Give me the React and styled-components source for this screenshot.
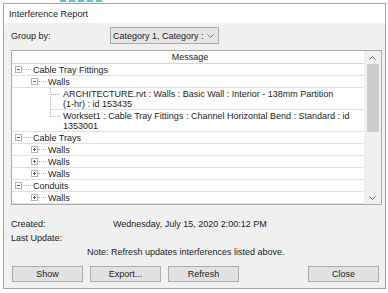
import React from 'react';
import styled, { createGlobalStyle } from 'styled-components';

const GlobalStyle = createGlobalStyle`
  html, body {
    margin: 0;
    padding: 0;
    background: #ffffff;
  }
  body {
    font-family: "Liberation Sans", Arial, sans-serif;
    font-size: 9px;
    color: #1c1c1c;
  }
`;

const Page = styled.div`
  width: 388px;
  height: 293px;
  padding: 0 2px 0 3px;
  box-sizing: border-box;
`;

const TopMark = styled.div`
  height: 3px;
  display: flex;
  padding-left: 57px;
`;

const Dash = styled.div`
  width: 42px;
  height: 0;
  border-top: 2px dashed #5cc6cf;
`;

const Dialog = styled.div`
  width: 383px;
  height: 286px;
  box-sizing: border-box;
  border: 1px solid #a4a4a4;
  display: flex;
  flex-direction: column;
`;

const TitleBar = styled.div`
  height: 19px;
  flex: none;
  background: #ffffff;
  display: flex;
  align-items: center;
  padding-left: 5px;
  font-size: 9.2px;
`;

const Body = styled.div`
  flex: 1;
  background: #f0f0f0;
  padding: 4px 3px 0 7px;
  display: flex;
  flex-direction: column;
`;

const GroupRow = styled.div`
  height: 17px;
  display: flex;
  align-items: center;
`;

const Label = styled.div`
  width: ${(p) => p.w}px;
  flex: none;
`;

const Dropdown = styled.div`
  width: 109px;
  height: 17px;
  box-sizing: border-box;
  background: #e5e5e5;
  border: 1px solid #acacac;
  display: flex;
  align-items: center;
  padding: 0 4px 0 2px;
  gap: 4px;
  white-space: nowrap;
  overflow: hidden;
`;

const DropText = styled.span`
  flex: 1;
  overflow: hidden;
`;

const Grid = styled.div`
  margin-top: 6px;
  height: 155px;
  box-sizing: border-box;
  border: 1px solid #ababab;
  background: #ffffff;
  display: flex;
`;

const GridMain = styled.div`
  flex: 1;
  display: flex;
  flex-direction: column;
  min-width: 0;
`;

const Header = styled.div`
  height: 13px;
  box-sizing: border-box;
  border-bottom: 1px solid #d6d6d6;
  display: flex;
  align-items: center;
  justify-content: center;
  padding-left: 4px;
`;

const Row = styled.div`
  height: ${(p) => p.h}px;
  box-sizing: border-box;
  display: flex;
  align-items: ${(p) => (p.leaf ? 'stretch' : 'center')};
  white-space: nowrap;
  background-image: linear-gradient(#e0e0e0, #e0e0e0);
  background-repeat: no-repeat;
  background-size: 100% 1px;
  background-position: ${(p) => p.lineFrom || 0}px 100%;
  padding-bottom: 1px;
`;

const Expander = styled.div`
  width: 7px;
  height: 7px;
  box-sizing: border-box;
  border: 1px solid #b2b2b2;
  margin-left: ${(p) => p.indent}px;
  display: flex;
  align-items: center;
  justify-content: center;
  flex: none;
`;

const Sign = styled.div`
  width: 3px;
  height: 1px;
  background: #666;
  display: flex;
  justify-content: center;
  align-items: center;
`;

const SignBar = styled.div`
  width: 1px;
  height: 3px;
  background: #666;
  flex: none;
`;

const Connector = styled.div`
  width: ${(p) => p.w}px;
  height: 0;
  border-top: 1px dotted #b4b4b4;
  margin-right: 2px;
  flex: none;
`;

const Stem = styled.div`
  margin-left: 38px;
  height: ${(p) => (p.last ? '7px' : 'auto')};
  border-left: 1px dotted #b4b4b4;
  padding-top: 6px;
  box-sizing: border-box;
  flex: none;
`;

const Tick = styled.div`
  width: 9px;
  border-top: 1px dotted #b4b4b4;
`;

const LeafText = styled.div`
  margin-left: 3px;
  padding-top: 1px;
  line-height: 10px;
`;

const Scrollbar = styled.div`
  width: 17px;
  flex: none;
  background: #f0f0f0;
  display: flex;
  flex-direction: column;
`;

const ArrowCell = styled.div`
  height: ${(p) => p.h}px;
  display: flex;
  align-items: center;
  justify-content: center;
  flex: none;
`;

const Track = styled.div`
  flex: 1;
`;

const Thumb = styled.div`
  width: 12px;
  height: 68px;
  margin-left: 3px;
  background: #cdcdcd;
`;

const Meta = styled.div`
  margin-top: 11px;
  display: flex;
  flex-direction: column;
`;

const MetaRow = styled.div`
  height: ${(p) => p.h}px;
  display: flex;
  align-items: center;
  padding-left: ${(p) => p.pad || 0}px;
`;

const ButtonRow = styled.div`
  margin-top: 7px;
  display: flex;
  gap: 7px;
  padding: 0 3px 0 1px;
`;

const Button = styled.button`
  width: 71px;
  height: 16px;
  box-sizing: border-box;
  background: #e1e1e1;
  border: 1px solid #adadad;
  font-family: inherit;
  font-size: 9px;
  color: #1c1c1c;
  padding: 0;
  margin-left: ${(p) => (p.push ? 'auto' : '0')};
`;

const Chevron = ({ up, color = '#606060' }) => (
  <svg width="7" height="4" viewBox="0 0 7 4">
    <path
      d={up ? 'M0.5 3.5 L3.5 0.5 L6.5 3.5' : 'M0.5 0.5 L3.5 3.5 L6.5 0.5'}
      fill="none"
      stroke={color}
      strokeWidth="1"
    />
  </svg>
);

const Node = ({ level, open, children }) => (
  <Row h={12}>
    <Expander indent={level === 0 ? 3 : 19}>
      <Sign>{!open && <SignBar />}</Sign>
    </Expander>
    <Connector w={level === 0 ? 9 : 8} />
    <span>{children}</span>
  </Row>
);

const Leaf = ({ last, lines }) => (
  <Row h={22} leaf lineFrom={last ? 0 : 38}>
    <Stem last={last}>
      <Tick />
    </Stem>
    <LeafText>
      {lines[0]}
      <br />
      {lines[1]}
    </LeafText>
  </Row>
);

export default function App() {
  return (
    <Page>
      <GlobalStyle />
      <TopMark>
        <Dash />
      </TopMark>
      <Dialog>
        <TitleBar>Interference Report</TitleBar>
        <Body>
          <GroupRow>
            <Label w={99}>Group by:</Label>
            <Dropdown>
              <DropText>Category 1, Category :</DropText>
              <Chevron color="#7a7a7a" />
            </Dropdown>
          </GroupRow>
          <Grid>
            <GridMain>
              <Header>Message</Header>
              <Node level={0} open>Cable Tray Fittings</Node>
              <Node level={1} open>Walls</Node>
              <Leaf
                lines={[
                  'ARCHITECTURE.rvt : Walls : Basic Wall : Interior - 138mm Partition',
                  '(1-hr) : id 153435',
                ]}
              />
              <Leaf
                last
                lines={[
                  'Workset1 : Cable Tray Fittings : Channel Horizontal Bend : Standard : id',
                  '1353001',
                ]}
              />
              <Node level={0} open>Cable Trays</Node>
              <Node level={1}>Walls</Node>
              <Node level={1}>Walls</Node>
              <Node level={1}>Walls</Node>
              <Node level={0} open>Conduits</Node>
              <Node level={1}>Walls</Node>
            </GridMain>
            <Scrollbar>
              <ArrowCell h={13}>
                <Chevron up />
              </ArrowCell>
              <Track>
                <Thumb />
              </Track>
              <ArrowCell h={12}>
                <Chevron />
              </ArrowCell>
            </Scrollbar>
          </Grid>
          <Meta>
            <MetaRow h={15}>
              <Label w={102}>Created:</Label>
              <span>Wednesday, July 15, 2020 2:00:12 PM</span>
            </MetaRow>
            <MetaRow h={14}>
              <Label w={102}>Last Update:</Label>
            </MetaRow>
            <MetaRow h={14} pad={76}>
              Note: Refresh updates interferences listed above.
            </MetaRow>
          </Meta>
          <ButtonRow>
            <Button>Show</Button>
            <Button>Export...</Button>
            <Button>Refresh</Button>
            <Button push>Close</Button>
          </ButtonRow>
        </Body>
      </Dialog>
    </Page>
  );
}
